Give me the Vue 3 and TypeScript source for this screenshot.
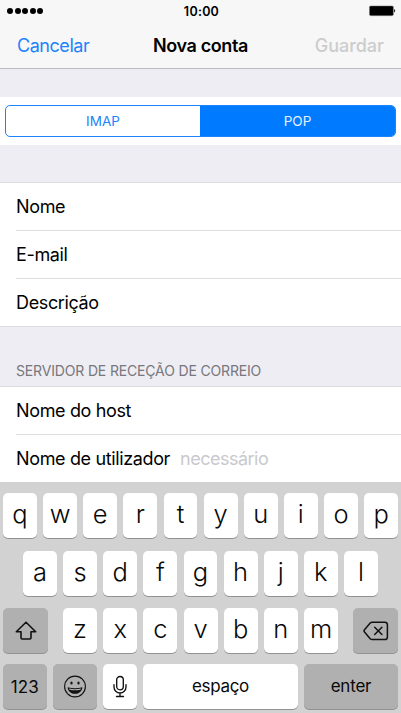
<script setup lang="ts">
import { ref } from 'vue'

type Protocol = 'IMAP' | 'POP'

interface Field {
  label: string
  placeholder?: string
}

const protocols: Protocol[] = ['IMAP', 'POP']
const selected = ref<Protocol>('POP')

const accountFields: Field[] = [
  { label: 'Nome' },
  { label: 'E-mail' },
  { label: 'Descrição' },
]

const serverFields: Field[] = [
  { label: 'Nome do host' },
  { label: 'Nome de utilizador', placeholder: 'necessário' },
]

const topKeys: string[] = [...'qwertyuiop']
const homeKeys: string[] = [...'asdfghjkl']
const bottomKeys: string[] = [...'zxcvbnm']
</script>

<template>
  <div class="screen">
    <header class="header">
      <div class="status">
        <div class="signal"><i v-for="n in 5" :key="n" class="dot"></i></div>
        <span class="time">10:00</span>
        <svg class="battery" width="27" height="12" viewBox="0 0 27 12">
          <rect x="0.4" y="0.9" width="24" height="9.8" rx="1.4" fill="#000" stroke="#888" stroke-width=".5" />
          <path d="M25.2 4v3.6q1-.5 1-1.8t-1-1.8z" fill="#000" />
        </svg>
      </div>
      <nav class="nav">
        <button class="cancel">Cancelar</button>
        <h1 class="title">Nova conta</h1>
        <button class="save">Guardar</button>
      </nav>
    </header>

    <main class="content">
      <div class="segment-band">
        <div class="segments">
          <button
            v-for="p in protocols"
            :key="p"
            class="segment"
            :class="{ active: p === selected }"
            @click="selected = p"
          >{{ p }}</button>
        </div>
      </div>

      <section class="group">
        <div v-for="f in accountFields" :key="f.label" class="row">
          <span>{{ f.label }}</span>
        </div>
      </section>

      <h2 class="section-title">SERVIDOR DE RECEÇÃO DE CORREIO</h2>
      <section class="group server">
        <div v-for="f in serverFields" :key="f.label" class="row">
          <span>{{ f.label }}</span>
          <span v-if="f.placeholder" class="placeholder">{{ f.placeholder }}</span>
        </div>
      </section>
    </main>

    <div class="keyboard">
      <div class="keys">
        <button v-for="k in topKeys" :key="k" class="key">{{ k }}</button>
      </div>
      <div class="keys home">
        <button v-for="k in homeKeys" :key="k" class="key">{{ k }}</button>
      </div>
      <div class="keys split">
        <button class="key dark shift" aria-label="shift">
          <svg width="22" height="20" viewBox="0 0 22 20" fill="none" stroke="#111" stroke-width="1.6" stroke-linejoin="round">
            <path d="M11 1.2 1.3 10.7H6v6.1q0 1.2 1.2 1.2h7.6q1.2 0 1.2-1.2v-6.1h4.7z" />
          </svg>
        </button>
        <div class="letters">
          <button v-for="k in bottomKeys" :key="k" class="key">{{ k }}</button>
        </div>
        <button class="key dark shift" aria-label="delete">
          <svg width="26" height="20" viewBox="0 0 26 20" fill="none" stroke="#111" stroke-width="1.5" stroke-linejoin="round" stroke-linecap="round">
            <path d="M9.2 1.2h12.6q2.6 0 2.6 2.6v12.2q0 2.6-2.6 2.6H9.2q-1.2 0-2-.8L1.5 11.1q-1-1.2 0-2.4L7.2 2q.8-.8 2-.8z" />
            <path d="m11.7 6.3 7.2 7.2m0-7.2-7.2 7.2" />
          </svg>
        </button>
      </div>
      <div class="keys last">
        <button class="key dark numbers">123</button>
        <button class="key dark emoji" aria-label="emoji">
          <svg width="24" height="24" viewBox="0 0 24 24">
            <circle cx="12" cy="11.5" r="10.4" fill="none" stroke="#111" stroke-width="1.1" />
            <ellipse cx="8.5" cy="8" rx="1.15" ry="1.5" fill="#111" />
            <ellipse cx="15.5" cy="8" rx="1.15" ry="1.5" fill="#111" />
            <path d="M4.6 12.2q7.4 2 14.8 0c-.2 4-3.5 6.6-7.4 6.6s-7.2-2.6-7.4-6.6z" fill="#111" />
            <path d="M6 13.5q6 1.3 12 0l-.5 1.2q-5.5 1.1-11 0z" fill="#b0b0b0" />
          </svg>
        </button>
        <button class="key mic" aria-label="ditado">
          <svg width="14" height="24" viewBox="0 0 14 24" fill="none" stroke="#111" stroke-width="1.35" stroke-linecap="round">
            <rect x="3.7" y="1.5" width="6.6" height="13.3" rx="3.3" />
            <path d="M1 9.7v2.3a6 6 0 0 0 12 0v-2.3M7 18v3.3M3.5 21.5h7" />
          </svg>
        </button>
        <button class="key space">espaço</button>
        <button class="key dark enter">enter</button>
      </div>
    </div>
  </div>
</template>

<style>
body {
  margin: 0;
}
</style>

<style scoped>
.screen {
  width: 401px;
  height: 713px;
  overflow: hidden;
  display: flex;
  flex-direction: column;
  background: #eeedf3;
  color: #000;
  font-family: Inter, "Liberation Sans", sans-serif;
}
button {
  appearance: none;
  border: 0;
  margin: 0;
  padding: 0;
  background: none;
  color: inherit;
  font: inherit;
}
h1,
h2 {
  margin: 0;
}
.header {
  box-sizing: border-box;
  height: 69px;
  background: #f7f7f7;
  border-bottom: 1px solid #bcbbc0;
}
.status {
  display: grid;
  grid-template-columns: 1fr auto 1fr;
  align-items: center;
  height: 22px;
  padding: 0 5px 0 7px;
}
.signal {
  display: flex;
  gap: 1.5px;
}
.dot {
  width: 6px;
  height: 6px;
  border-radius: 50%;
  background: #000;
}
.time {
  font-size: 12.5px;
  font-weight: 600;
  letter-spacing: 0.25px;
}
.battery {
  justify-self: end;
}
.nav {
  display: grid;
  grid-template-columns: 1fr auto 1fr;
  align-items: center;
  height: 46px;
  padding: 0 17px;
  font-size: 18px;
}
.cancel {
  justify-self: start;
  color: #1b84fb;
  letter-spacing: -0.45px;
}
.title {
  font-size: 18px;
  font-weight: 600;
  letter-spacing: -0.4px;
}
.save {
  justify-self: end;
  color: #ccc;
  font-weight: 500;
  letter-spacing: -0.02px;
}
.content {
  height: 413px;
}
.segment-band {
  margin: 28px 0 37px;
  padding: 8px 5px;
  background: #fff;
}
.segments {
  box-sizing: border-box;
  display: flex;
  height: 32px;
  border: 1px solid #1b84fb;
  border-radius: 5px;
  overflow: hidden;
}
.segment {
  flex: 0 0 194px;
  color: #1b84fb;
  font-size: 13.5px;
  letter-spacing: 0;
}
.segment.active {
  flex: 1;
  background: #007aff;
  color: #e4f1ff;
}
.group {
  background: #fff;
  border-top: 1px solid #dcdbe0;
  border-bottom: 1px solid #dcdbe0;
}
.row {
  box-sizing: border-box;
  display: flex;
  align-items: center;
  height: 48px;
  margin-left: 16px;
  border-bottom: 1px solid #dddce1;
  font-size: 18px;
  letter-spacing: -0.36px;
}
.row:last-child {
  height: 47px;
  border-bottom: 0;
}
.placeholder {
  margin-left: 10px;
  color: #c9c9ce;
  letter-spacing: -0.5px;
}
.section-title {
  box-sizing: border-box;
  height: 59px;
  padding: 35px 16px 0;
  color: #77777c;
  font-size: 14px;
  font-weight: 400;
  line-height: 18px;
  letter-spacing: -0.16px;
}
.group.server {
  border-bottom: 0;
}
.keyboard {
  box-sizing: border-box;
  height: 231px;
  padding: 11px 3px 0;
  background: #d2d2d2;
}
.keys {
  display: flex;
  gap: 6.2px;
  height: 45px;
  margin-bottom: 12.5px;
}
.key {
  flex: 1;
  display: flex;
  align-items: center;
  justify-content: center;
  height: 45px;
  min-width: 0;
  border-radius: 5px;
  background: #fff;
  box-shadow: 0 1px 0 #929292;
  color: #080808;
  font-size: 25.5px;
  font-weight: 350;
  line-height: 32px;
  padding-bottom: 3px;
  box-sizing: border-box;
}
.keys.home {
  padding: 0 20px;
}
.keys.split {
  justify-content: space-between;
  gap: 0;
  margin-bottom: 11px;
}
.letters {
  display: flex;
  gap: 6.2px;
  width: 275px;
}
.key.dark {
  background: #b0b0b0;
}
.key.shift {
  flex: 0 0 45px;
  padding: 0;
}
.key.numbers {
  flex: 0 0 43.5px;
  font-size: 17px;
  font-weight: 400;
  padding: 0;
}
.key.emoji {
  flex: 0 0 44px;
  padding: 0;
}
.key.mic {
  flex: 0 0 34px;
  padding: 0;
}
.key.space,
.key.enter {
  font-size: 17px;
  font-weight: 400;
  letter-spacing: -0.35px;
  padding: 0 0 1px;
}
.key.enter {
  flex: 0 0 94px;
  letter-spacing: -0.2px;
}
</style>
